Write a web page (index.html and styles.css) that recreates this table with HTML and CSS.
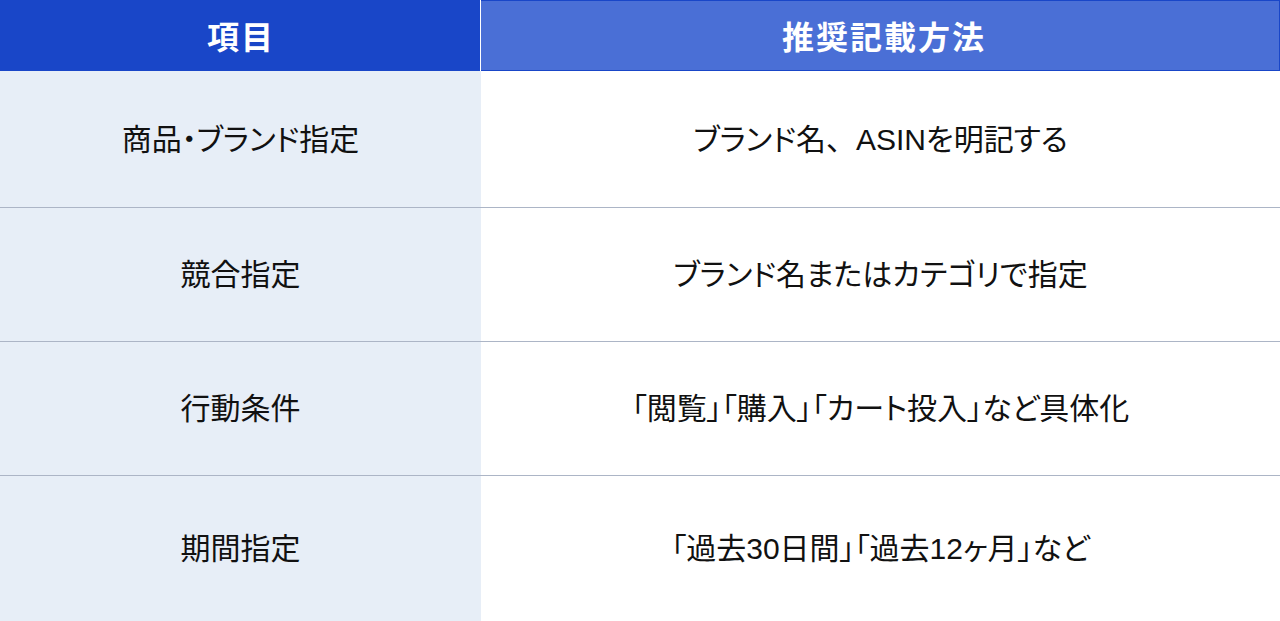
FILE: index.html
```html
<!DOCTYPE html>
<html lang="ja">
<head>
<meta charset="utf-8">
<link rel="stylesheet" href="styles.css">
</head>
<body>
<div class="table">
  <div class="head head-left">項目</div>
  <div class="head head-right">推奨記載方法</div>

  <div class="cell key r1">商品・ブランド指定</div>
  <div class="cell val r1">ブランド名<span class="full">、</span>ASINを明記する</div>

  <div class="cell key r2">競合指定</div>
  <div class="cell val r2">ブランド名またはカテゴリで指定</div>

  <div class="cell key r3">行動条件</div>
  <div class="cell val r3">「閲覧」「購入」「カート投入」など具体化</div>

  <div class="cell key r4 last">期間指定</div>
  <div class="cell val r4 last">「過去30日間」「過去12ヶ月」など</div>
</div>
</body>
</html>
```

FILE: styles.css
```css
html, body {
  margin: 0;
  padding: 0;
  background: #ffffff;
  overflow: hidden;
}

.table {
  display: grid;
  grid-template-columns: 481px 1fr;
  grid-template-rows: 71px 137px 134px 134px 145px;
  width: 1280px;
  font-family: "Liberation Sans", "Noto Sans CJK JP", sans-serif;
}

.head {
  display: flex;
  align-items: center;
  justify-content: center;
  color: #ffffff;
  font-weight: 700;
  font-size: 32px;
  letter-spacing: 2px;
  padding-left: 2px;
  padding-bottom: 2px;
  box-sizing: border-box;
}

.head-left {
  background: #1946c8;
  border-right: 1px solid #ffffff;
}

.head-right {
  background: #4a6fd6;
  border-top: 1px solid #1946c8;
  border-bottom: 1px solid #1946c8;
  border-right: 1px solid #1946c8;
  padding-left: 8px;
}

.cell {
  display: flex;
  align-items: center;
  justify-content: center;
  font-size: 30px;
  font-feature-settings: "palt";
  color: #111111;
  box-sizing: border-box;
  padding-bottom: 5px;
  border-bottom: 1px solid #acb5c6;
}

.full {
  font-feature-settings: normal;
}

.cell.last {
  border-bottom: none;
}

.key {
  background: #e7eef7;
}

.val {
  background: #ffffff;
}
```
